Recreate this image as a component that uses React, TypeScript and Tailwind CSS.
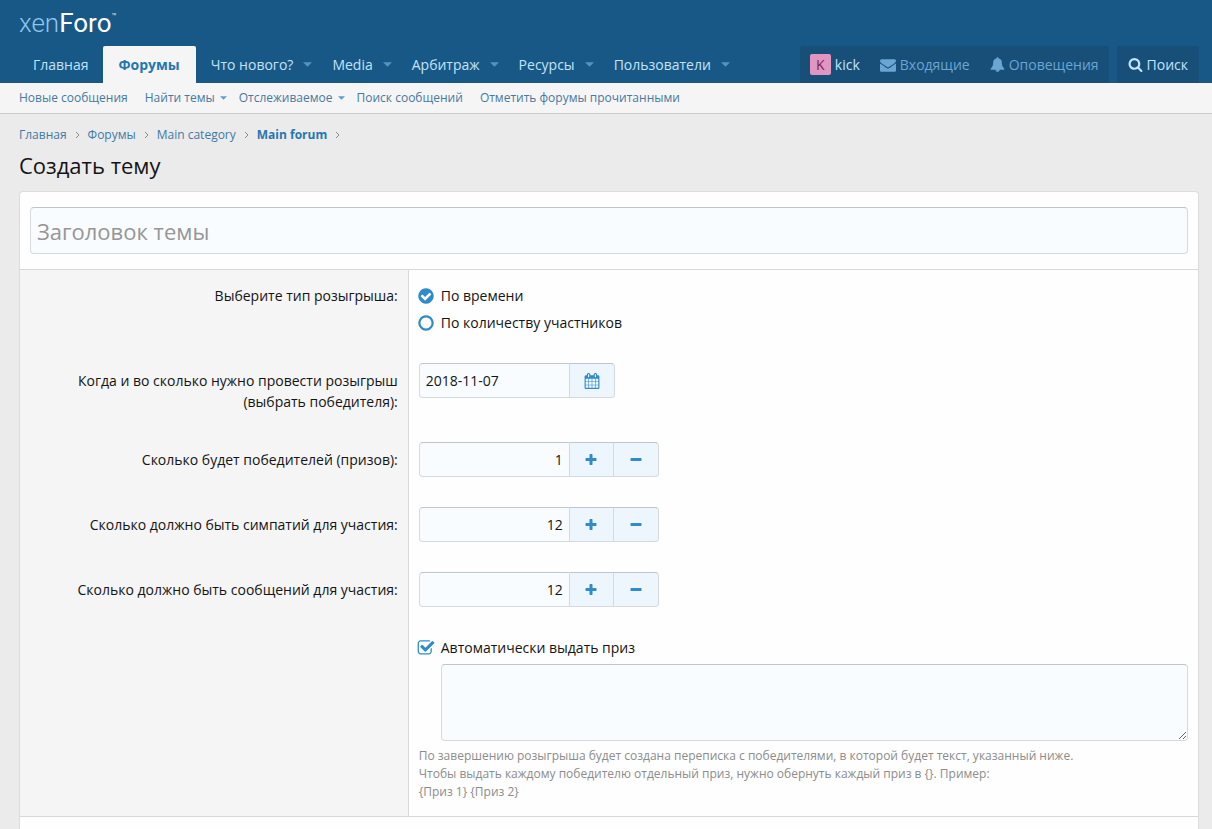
import { useState } from 'react';
import type { ReactNode } from 'react';
import clsx from 'clsx';

const ICONS = {
  plus: 'M1600 736v192q0 40-28 68t-68 28h-416v416q0 40-28 68t-68 28h-192q-40 0-68-28t-28-68v-416h-416q-40 0-68-28t-28-68v-192q0-40 28-68t68-28h416v-416q0-40 28-68t68-28h192q40 0 68 28t28 68v416h416q40 0 68 28t28 68z',
  minus: 'M1600 736v192q0 40-28 68t-68 28h-1216q-40 0-68-28t-28-68v-192q0-40 28-68t68-28h1216q40 0 68 28t28 68z',
  search:
    'M1216 832q0-185-131.5-316.5t-316.5-131.5-316.5 131.5-131.5 316.5 131.5 316.5 316.5 131.5 316.5-131.5 131.5-316.5zm512 832q0 52-38 90t-90 38q-54 0-90-38l-343-342q-179 124-399 124-143 0-273.5-55.5t-225-150-150-225-55.5-273.5 55.5-273.5 150-225 225-150 273.5-55.5 273.5 55.5 225 150 150 225 55.5 273.5q0 220-124 399l343 343q37 37 37 90z',
  calendar:
    'M192 1664h288v-288h-288v288zm352 0h320v-288h-320v288zm-352-352h288v-320h-288v320zm352 0h320v-320h-320v320zm-352-384h288v-288h-288v288zm736 736h320v-288h-320v288zm-384-736h320v-288h-320v288zm768 736h288v-288h-288v288zm-384-352h320v-320h-320v320zm-352-864v-288q0-13-9.5-22.5t-22.5-9.5h-64q-13 0-22.5 9.5t-9.5 22.5v288q0 13 9.5 22.5t22.5 9.5h64q13 0 22.5-9.5t9.5-22.5zm736 864h288v-320h-288v320zm-384-384h320v-288h-320v288zm384 0h288v-288h-288v288zm32-480v-288q0-13-9.5-22.5t-22.5-9.5h-64q-13 0-22.5 9.5t-9.5 22.5v288q0 13 9.5 22.5t22.5 9.5h64q13 0 22.5-9.5t9.5-22.5zm384-64v1280q0 52-38 90t-90 38h-1408q-52 0-90-38t-38-90v-1280q0-52 38-90t90-38h128v-96q0-66 47-113t113-47h64q66 0 113 47t47 113v96h384v-96q0-66 47-113t113-47h64q66 0 113 47t47 113v96h128q52 0 90 38t38 90z',
  envelope:
    'M1792 710v794q0 66-47 113t-113 47h-1472q-66 0-113-47t-47-113v-794q44 49 101 87 362 246 497 345 57 42 92.5 65.5t94.5 48 110 24.5h2q51 0 110-24.5t94.5-48 92.5-65.5q170-123 498-345 57-39 100-87zm0-294q0 79-49 151t-122 123q-376 261-468 325-10 7-42.5 31t-54 38.5-52 32.5-57.5 27-50 9h-2q-23 0-50-9t-57.5-27-52-32.5-54-38.5-42.5-31q-91-64-262-182.5t-205-142.5q-62-42-117-115.5t-55-136.5q0-78 41.5-130t118.5-52h1472q65 0 112.5 47t47.5 113z',
  bell: 'M912 1696q0-16-16-16-59 0-101.5-42.5t-42.5-101.5q0-16-16-16t-16 16q0 73 51.5 124.5t124.5 51.5q16 0 16-16zm816-288q0 52-38 90t-90 38h-448q0 106-75 181t-181 75-181-75-75-181h-448q-52 0-90-38t-38-90q50-42 91-88t85-119.5 74.5-158.5 50-206 19.5-260q0-152 117-282.5t307-158.5q-8-19-8-39 0-40 28-68t68-28 68 28 28 68q0 20-8 39 190 28 307 158.5t117 282.5q0 139 19.5 260t50 206 74.5 158.5 85 119.5 91 88z',
  checkCircle:
    'M1412 734q0-28-18-46l-91-90q-19-19-45-19t-45 19l-408 407-226-226q-19-19-45-19t-45 19l-91 90q-18 18-18 46 0 27 18 45l362 362q19 19 45 19 27 0 46-19l543-543q18-18 18-45zm252 162q0 209-103 385.5t-279.5 279.5-385.5 103-385.5-103-279.5-279.5-103-385.5 103-385.5 279.5-279.5 385.5-103 385.5 103 279.5 279.5 103 385.5z',
  circle:
    'M896 352q-148 0-273 73t-198 198-73 273 73 273 198 198 273 73 273-73 198-198 73-273-73-273-198-198-273-73zm768 544q0 209-103 385.5t-279.5 279.5-385.5 103-385.5-103-279.5-279.5-103-385.5 103-385.5 279.5-279.5 385.5-103 385.5 103 279.5 279.5 103 385.5z',
  checkSquare:
    'M1472 930v318q0 119-84.5 203.5t-203.5 84.5h-832q-119 0-203.5-84.5t-84.5-203.5v-832q0-119 84.5-203.5t203.5-84.5h832q63 0 117 25 15 7 18 23 3 17-9 29l-49 49q-10 10-23 10-3 0-9-2-23-6-45-6h-832q-66 0-113 47t-47 113v832q0 66 47 113t113 47h832q66 0 113-47t47-113v-254q0-13 9-22l64-64q10-10 23-10 6 0 12 3 20 8 20 29zm231-489l-814 814q-24 24-57 24t-57-24l-430-430q-24-24-24-57t24-57l110-110q24-24 57-24t57 24l263 263 647-647q24-24 57-24t57 24l110 110q24 24 24 57t-24 57z',
  square:
    'M1184 256h-832q-66 0-113 47t-47 113v832q0 66 47 113t113 47h832q66 0 113-47t47-113v-832q0-66-47-113t-113-47zm288 160v832q0 119-84.5 203.5t-203.5 84.5h-832q-119 0-203.5-84.5t-84.5-203.5v-832q0-119 84.5-203.5t203.5-84.5h832q119 0 203.5 84.5t84.5 203.5z',
};

function Icon({ name, className }: { name: keyof typeof ICONS; className?: string }) {
  return (
    <svg viewBox="0 0 1792 1792" fill="currentColor" className={clsx('shrink-0', className)} aria-hidden="true">
      <path d={ICONS[name]} />
    </svg>
  );
}

function Caret({ className }: { className?: string }) {
  return (
    <svg viewBox="0 0 10 5" fill="currentColor" className={clsx('shrink-0', className)} aria-hidden="true">
      <path d="M0 0h10L5 5z" />
    </svg>
  );
}

const navItems = [
  { label: 'Что нового?' },
  { label: 'Media' },
  { label: 'Арбитраж' },
  { label: 'Ресурсы' },
  { label: 'Пользователи' },
];

const subNav = [
  { label: 'Новые сообщения' },
  { label: 'Найти темы', menu: true },
  { label: 'Отслеживаемое', menu: true },
  { label: 'Поиск сообщений' },
  { label: 'Отметить форумы прочитанными' },
];

const crumbs = ['Главная', 'Форумы', 'Main category', 'Main forum'];

const gutter = 'pl-[19px] pr-[13px]';
const inputBox = 'border border-[#d5dade] border-t-[#bfc5c9] bg-[#f9fcff] text-[#141414] outline-none';
const addonButton =
  'flex items-center justify-center border-y border-r border-[#d5dade] border-t-[#bfc5c9] bg-[#edf6fd] text-[#2f8bc9]';

function FormRow({ label, htmlFor, input, children }: { label?: string; htmlFor?: string; input?: boolean; children: ReactNode }) {
  return (
    <div className="flex">
      <div className={clsx('w-[33%] shrink-0 border-r border-[#d8d8d8] bg-[#f5f5f5] px-2.5 pb-[15px] text-right', input ? 'pt-[22px]' : 'pt-[15px]')}>
        {label && <label htmlFor={htmlFor}>{label}</label>}
      </div>
      <div className="min-w-0 flex-1 px-2.5 py-[15px]">{children}</div>
    </div>
  );
}

function NumberRow({ id, label, initial }: { id: string; label: string; initial: number }) {
  const [value, setValue] = useState(initial);

  return (
    <FormRow label={label} htmlFor={id} input>
      <div className="flex h-[35px]">
        <input
          id={id}
          type="text"
          inputMode="numeric"
          value={value}
          onChange={(e) => setValue(Number(e.target.value) || 0)}
          className={clsx('w-[151px] rounded-l px-1.5 text-right', inputBox)}
        />
        <button type="button" aria-label="+" onClick={() => setValue(value + 1)} className={clsx('w-11', addonButton)}>
          <Icon name="plus" className="size-[14px]" />
        </button>
        <button
          type="button"
          aria-label="-"
          onClick={() => setValue(Math.max(0, value - 1))}
          className={clsx('w-[45px] rounded-r', addonButton)}
        >
          <Icon name="minus" className="size-[14px]" />
        </button>
      </div>
    </FormRow>
  );
}

function RadioOption({ id, label, checked, onChange }: { id: string; label: string; checked: boolean; onChange: () => void }) {
  return (
    <label htmlFor={id} className="relative flex items-center gap-1.5">
      <input id={id} type="radio" name="type" checked={checked} onChange={onChange} className="sr-only" />
      <Icon name={checked ? 'checkCircle' : 'circle'} className="-ml-0.5 size-[18px] text-[#2f8bc9]" />
      {label}
    </label>
  );
}

export default function App() {
  const [type, setType] = useState('time');
  const [autoPrize, setAutoPrize] = useState(true);

  return (
    <div className="flex min-h-screen flex-col bg-[#ebebeb] font-['Open_Sans',sans-serif] text-sm leading-[21px] text-[#141414]">
      {/* Header and main nav */}
      <header className={clsx('bg-[#185886]', gutter)}>
        <a href="#" className="flex h-[46px] items-center font-['Roboto',sans-serif] text-[26px] font-light text-white">
          <span className="text-[#8fc6f0]">xen</span>
          <span className="font-normal">Foro</span>
          <span className="pb-3 text-[8px] leading-none">™</span>
        </a>
        <nav className="flex h-[37px] items-stretch text-[#c3e3fb]">
          <a href="#" className="flex items-center px-3.5">Главная</a>
          <a href="#" className="flex items-center rounded-t-xs bg-[#f5f5f5] px-4 font-bold text-[#2577b1]">Форумы</a>
          {navItems.map((item) => (
            <a key={item.label} href="#" className="flex items-center gap-2.5 pr-[5px] pl-[15px]">
              {item.label}
              <Caret className="h-[5px] w-[9px] text-[#5592c2]" />
            </a>
          ))}
          <div className="ml-auto flex rounded-t-xs bg-[#174f78]">
            <a href="#" className="flex items-center gap-1 px-2.5">
              <span className="flex size-[21px] items-center justify-center rounded-xs bg-[#e096c1] text-[#7f2257]">K</span>
              kick
            </a>
            <a href="#" className="flex items-center gap-1 px-2.5 text-[#6ba5d4]">
              <Icon name="envelope" className="size-4" />
              Входящие
            </a>
            <a href="#" className="flex items-center gap-1 px-2.5 text-[#6ba5d4]">
              <Icon name="bell" className="size-[15px]" />
              Оповещения
            </a>
          </div>
          <button type="button" className="ml-2 flex items-center gap-1 rounded-t-xs bg-[#174f78] px-[11px]">
            <Icon name="search" className="size-[15px]" />
            Поиск
          </button>
        </nav>
      </header>

      <nav className={clsx('flex h-[31px] items-center gap-[17px] border-b border-[#c8cccc] bg-[#f5f5f5] text-xs text-[#47799f]', gutter)}>
        {subNav.map((item) => (
          <a key={item.label} href="#" className={clsx('flex items-center gap-[5px]', item.menu && '-mr-[5px]')}>
            {item.label}
            {item.menu && <Caret className="h-1 w-[7px] text-[#5b9fd0]" />}
          </a>
        ))}
      </nav>

      {/* Breadcrumbs and title */}
      <div className={clsx('pt-2.5', gutter)}>
        <ul className="flex items-center gap-2 text-xs leading-[21px] text-[#3c7ba8]">
          {crumbs.map((crumb, i) => (
            <li key={crumb} className="flex items-center gap-2">
              <a href="#" className={clsx(i === crumbs.length - 1 && 'font-bold text-[#2577b1]')}>{crumb}</a>
              <svg viewBox="0 0 5 8" className="h-2 w-[5px] text-[#8a8a8a]" fill="none" stroke="currentColor" aria-hidden="true">
                <path d="M1 1l3 3-3 3" />
              </svg>
            </li>
          ))}
        </ul>
        <h1 className="mt-1 text-[22px] leading-8">Создать тему</h1>
      </div>

      <main className={clsx('flex flex-1 flex-col pt-2.5', gutter)}>
        <form className="flex-1 rounded-t border border-b-0 border-[#dcdcdc] bg-[#fefefe]">
          <div className="border-b border-[#d8d8d8] px-2.5 py-[15px]">
            <input
              type="text"
              placeholder="Заголовок темы"
              aria-label="Заголовок темы"
              className={clsx('h-[47px] w-full rounded px-1.5 text-[22px] placeholder:text-[#969696]', inputBox)}
            />
          </div>

          <FormRow label="Выберите тип розыгрыша:" htmlFor="type-time">
            <div className="flex flex-col gap-1.5">
              <RadioOption id="type-time" label="По времени" checked={type === 'time'} onChange={() => setType('time')} />
              <RadioOption id="type-count" label="По количеству участников" checked={type === 'count'} onChange={() => setType('count')} />
            </div>
          </FormRow>

          <FormRow label="Когда и во сколько нужно провести розыгрыш (выбрать победителя):" htmlFor="date" input>
            <div className="flex h-[35px]">
              <input id="date" type="text" defaultValue="2018-11-07" className={clsx('w-[151px] rounded-l px-1.5', inputBox)} />
              <button type="button" aria-label="2018-11-07" className={clsx('w-[45px] rounded-r', addonButton)}>
                <Icon name="calendar" className="size-4" />
              </button>
            </div>
          </FormRow>

          <NumberRow id="winners" label="Сколько будет победителей (призов):" initial={1} />
          <NumberRow id="likes" label="Сколько должно быть симпатий для участия:" initial={12} />
          <NumberRow id="messages" label="Сколько должно быть сообщений для участия:" initial={12} />

          <FormRow>
            <label className="relative flex items-center gap-1.5">
              <input type="checkbox" checked={autoPrize} onChange={() => setAutoPrize(!autoPrize)} className="sr-only" />
              <Icon name={autoPrize ? 'checkSquare' : 'square'} className="-ml-0.5 size-[18px] text-[#2f8bc9]" />
              Автоматически выдать приз
            </label>
            <div className="mt-1.5 pl-[22px]">
              <textarea aria-label="Автоматически выдать приз" className={clsx('block h-[77px] w-full resize-y rounded p-1.5', inputBox)} />
            </div>
            <div className="mt-1.5 text-xs leading-[18px] text-[#8c8c8c]">
              По завершению розыгрыша будет создана переписка с победителями, в которой будет текст, указанный ниже.
              <br />
              Чтобы выдать каждому победителю отдельный приз, нужно обернуть каждый приз в {'{}'}. Пример:
              <br />
              {'{Приз 1} {Приз 2}'}
            </div>
          </FormRow>
          <div className="border-t border-[#d8d8d8]" />
        </form>
      </main>
    </div>
  );
}
